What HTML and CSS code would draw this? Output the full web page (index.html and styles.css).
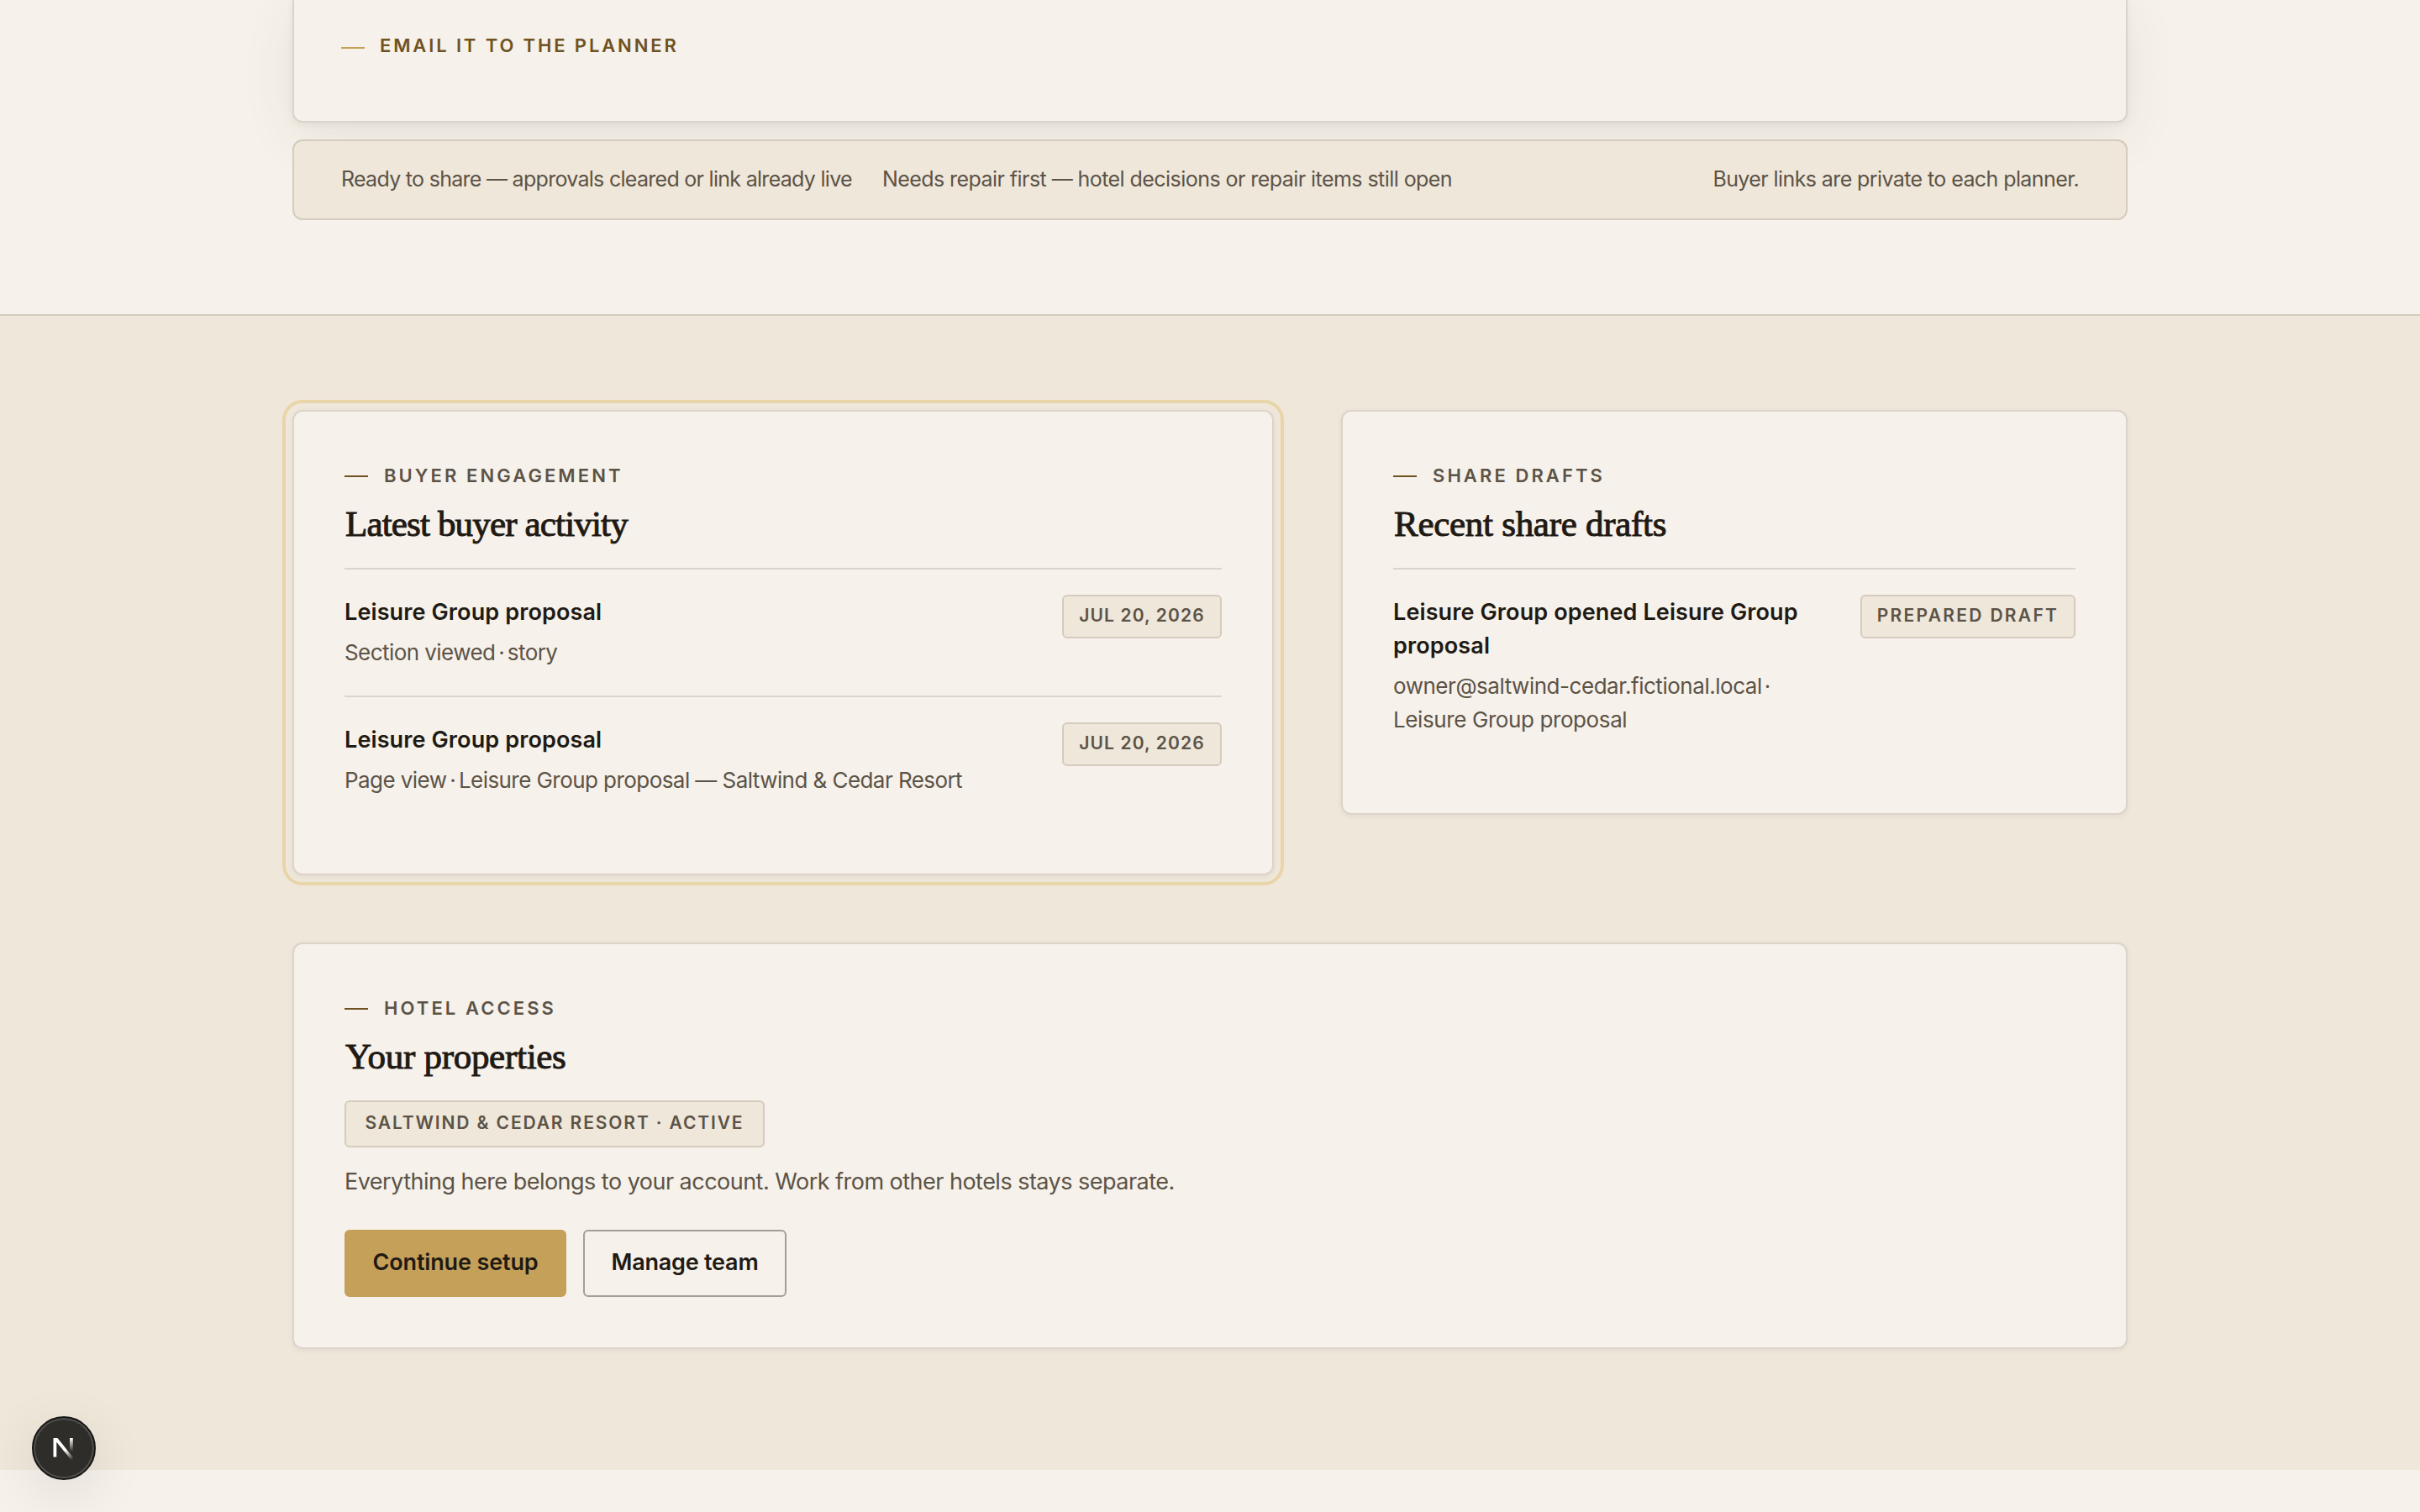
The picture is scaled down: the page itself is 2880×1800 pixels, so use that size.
FILE: index.html
```html
<!DOCTYPE html>
<html lang="en">
<head>
<meta charset="utf-8">
<title>Proposals</title>
<link rel="stylesheet" href="styles.css">
</head>
<body>
<main>
  <section class="share">
    <div class="panel">
      <p class="eyebrow eyebrow-gold"><span class="dash"></span><span class="eyebrow-text">EMAIL IT TO THE PLANNER</span></p>
    </div>
    <div class="legend">
      <span class="legend-ready">Ready to share — approvals cleared or link already live</span>
      <span class="legend-repair">Needs repair first — hotel decisions or repair items still open</span>
      <span class="legend-note">Buyer links are private to each planner.</span>
    </div>
  </section>
  <section class="activity">
    <div class="grid">
      <article class="card card-focus">
        <p class="eyebrow"><span class="dash"></span><span class="eyebrow-text">BUYER ENGAGEMENT</span></p>
        <h2 class="tight">Latest buyer activity</h2>
        <ul class="rows">
          <li class="row">
            <div class="row-body">
              <p class="row-title">Leisure Group proposal</p>
              <p class="row-sub row-sub-event">Section viewed<span class="dot"> · </span>story</p>
            </div>
            <span class="badge badge-date">JUL 20, 2026</span>
          </li>
          <li class="row">
            <div class="row-body">
              <p class="row-title">Leisure Group proposal</p>
              <p class="row-sub row-sub-event">Page view<span class="dot"> · </span>Leisure Group proposal — Saltwind &amp; Cedar Resort</p>
            </div>
            <span class="badge badge-date">JUL 20, 2026</span>
          </li>
        </ul>
      </article>
      <article class="card">
        <p class="eyebrow"><span class="dash"></span><span class="eyebrow-text">SHARE DRAFTS</span></p>
        <h2>Recent share drafts</h2>
        <ul class="rows">
          <li class="row">
            <div class="row-body">
              <p class="row-title">Leisure Group opened Leisure Group proposal</p>
              <p class="row-sub"><span class="address">owner@saltwind-cedar.fictional.local</span><span class="dot dot-end"> ·</span><br>Leisure Group proposal</p>
            </div>
            <span class="badge badge-state">PREPARED DRAFT</span>
          </li>
        </ul>
      </article>
      <article class="card card-wide">
        <p class="eyebrow"><span class="dash"></span><span class="eyebrow-text">HOTEL ACCESS</span></p>
        <h2>Your properties</h2>
        <span class="badge badge-hotel">SALTWIND &amp; CEDAR RESORT · ACTIVE</span>
        <p class="note">Everything here belongs to your account. Work from other hotels stays separate.</p>
        <div class="actions">
          <a class="button button-primary">Continue setup</a>
          <a class="button">Manage team</a>
        </div>
      </article>
    </div>
  </section>
</main>
<div class="dev-badge">
  <svg width="28" height="30" viewBox="0 0 28 30" fill="none">
    <defs>
      <linearGradient id="diag" x1="16" y1="17" x2="25" y2="29" gradientUnits="userSpaceOnUse"><stop stop-color="#fff"/><stop offset=".95" stop-color="#fff" stop-opacity="0"/></linearGradient>
      <linearGradient id="stem" x1="22" y1="3" x2="22" y2="19" gradientUnits="userSpaceOnUse"><stop stop-color="#fff"/><stop offset="1" stop-color="#fff" stop-opacity="0"/></linearGradient>
    </defs>
    <path d="M1.5 3H6.5L26.5 28L23.5 30L5.3 7.8V25.5H1.5Z" fill="url(#diag)"/>
    <path d="M21 3H24.8V19H21Z" fill="url(#stem)"/>
  </svg>
</div>
</body>
</html>
```
FILE: styles.css
```css
* { box-sizing: border-box; }
body {
  margin: 0;
  min-height: 1800px;
  background: #f6f1ea;
  color: #1f1a14;
  font-family: Inter, "Liberation Sans", sans-serif;
}
p, h2, ul { margin: 0; padding: 0; }
ul { list-style: none; }

.share { width: 2184px; margin: 0 auto; padding-bottom: 112px; }
.panel {
  height: 146px;
  padding: 37px 56px 0;
  border: 2px solid #dad5cc;
  border-top: 0;
  border-radius: 0 0 12px 12px;
  background: #f6f1ea;
  box-shadow: 0 2px 8px rgba(31, 26, 20, .06), 0 16px 64px rgba(64, 64, 16, .08);
}
.legend {
  position: relative;
  display: flex;
  height: 96px;
  margin-top: 20px;
  padding: 0 56px;
  border: 2px solid #d5cbbf;
  border-radius: 12px;
  background: #efe7da;
  color: #5c5347;
  font-size: 25px;
  line-height: 90px;
  white-space: nowrap;
}
.legend-ready { letter-spacing: -.711px; }
.legend-repair { margin-left: 36px; letter-spacing: -.555px; }
.legend-note { margin-left: auto; letter-spacing: -.593px; }

.eyebrow {
  display: flex;
  align-items: center;
  gap: 18px;
  height: 34px;
  color: #5c5347;
  font-size: 22px;
  font-weight: 600;
  line-height: 32px;
  letter-spacing: 3.08px;
}
.dash { width: 28px; height: 2px; background: #6f5122; }
.eyebrow-text { padding-bottom: 2px; }
.card .eyebrow { gap: 19px; }
.eyebrow-gold { color: #6f5122; letter-spacing: 2.87px; }
.eyebrow-gold .dash { margin-top: 6px; background: #c5a059; }
.eyebrow-gold .eyebrow-text { padding: 0; }

.activity {
  padding: 112px 0 144px;
  border-top: 2px solid #d5cbbf;
  background: #efe7da;
}
.grid {
  display: grid;
  grid-template-columns: 1168px 936px;
  align-items: start;
  gap: 80px;
  width: 2184px;
  margin: 0 auto;
}
.card {
  padding: 60px;
  border: 2px solid #dcd4ca;
  border-radius: 12px;
  background: #f6f1ea;
  box-shadow: 0 2px 6px rgba(31, 26, 20, .06);
}
.card-focus { outline: 4px solid #e8d5a8; outline-offset: 8px; }
.card-wide { grid-column: 1 / -1; }

h2 {
  margin: 16px 0 0 1px;
  font-family: "Liberation Serif", serif;
  font-size: 43px;
  font-weight: 400;
  line-height: 48px;
  letter-spacing: -.28px;
  -webkit-text-stroke: 1px #1f1a14;
}
h2.tight { letter-spacing: -.84px; }

.rows { margin-top: 28px; }
.row {
  display: flex;
  align-items: flex-start;
  justify-content: space-between;
  gap: 32px;
  padding: 30px 0 31px;
  border-top: 2px solid #dad5cc;
}
.row-title {
  padding-top: 1px;
  font-size: 27px;
  font-weight: 600;
  line-height: 40px;
  letter-spacing: .12px;
}
.row-sub {
  margin-top: 8px;
  color: #5c5347;
  font-size: 26px;
  line-height: 40px;
  letter-spacing: -.4px;
}
.row-sub-event { letter-spacing: -.56px; }
.dot { word-spacing: -3px; }
.dot-end { word-spacing: -4px; }
.address { letter-spacing: -.463px; }
.badge {
  flex: none;
  border: 2px solid #d5cbbf;
  border-radius: 6px;
  background: #efe7da;
  color: #5c5347;
  font-size: 21px;
  font-weight: 600;
  line-height: 46px;
  text-align: center;
  white-space: nowrap;
}
.badge-date { width: 190px; height: 52px; letter-spacing: 1.123px; }
.badge-state { width: 256px; height: 52px; letter-spacing: 2.3px; }
.badge-hotel {
  display: block;
  width: 500px;
  height: 56px;
  margin-top: 28px;
  line-height: 50px;
  letter-spacing: 1.88px;
}
.note {
  margin-top: 19px;
  color: #5c5347;
  font-size: 27px;
  line-height: 44px;
  letter-spacing: -.52px;
}
.actions { display: flex; gap: 20px; margin-top: 35px; }
.button {
  width: 242px;
  height: 80px;
  border: 2px solid #a39e96;
  border-radius: 6px;
  font-size: 27px;
  font-weight: 600;
  line-height: 73px;
  letter-spacing: -.22px;
  text-align: center;
}
.button-primary { width: 264px; border-color: #c5a059; background: #c5a059; letter-spacing: -.14px; }

.dev-badge {
  position: fixed;
  left: 38px;
  bottom: 38px;
  display: flex;
  align-items: center;
  justify-content: center;
  width: 76px;
  height: 76px;
  border: 2px solid #171717;
  border-radius: 50%;
  background: #2e2d29;
  box-shadow: inset 0 0 0 2px #51504d, 0 16px 64px rgba(0, 0, 0, .1);
}
```
